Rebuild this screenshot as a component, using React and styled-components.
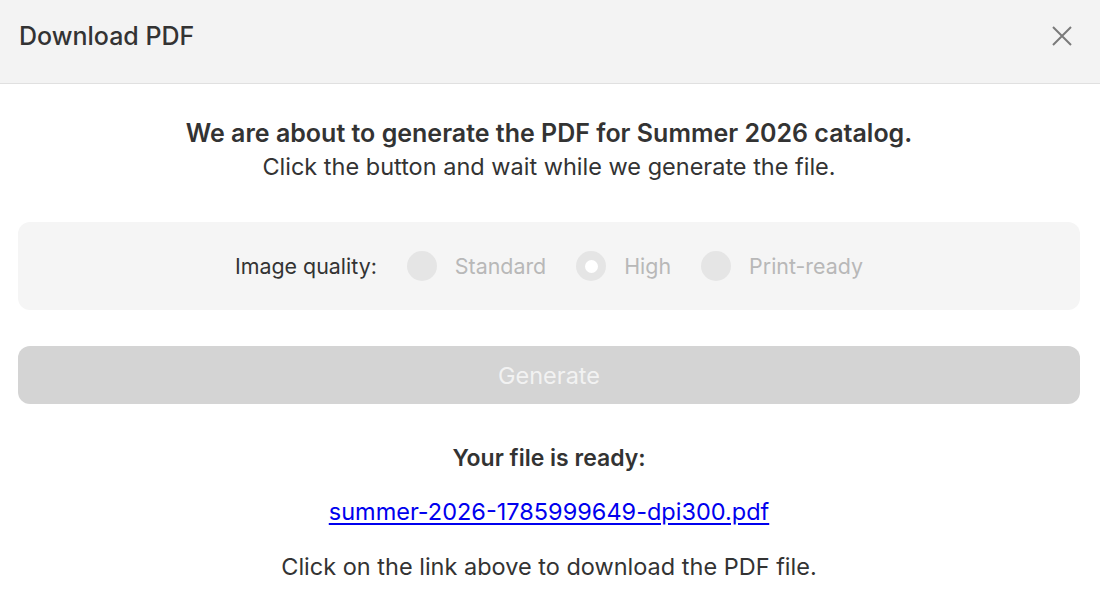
import React, { useState } from 'react';
import styled, { createGlobalStyle } from 'styled-components';

const GlobalStyle = createGlobalStyle`
  body {
    margin: 0;
    background: #fff;
    font-family: Inter, "Noto Sans", sans-serif;
    color: #333;
  }
`;

const Dialog = styled.div`
  width: 1100px;
  height: 600px;
  background: #fff;
  overflow: hidden;
`;

const Header = styled.header`
  height: 84px;
  background: #f3f3f3;
  border-bottom: 1px solid #e0e0e0;
  display: flex;
  align-items: flex-start;
  justify-content: space-between;
  padding: 20px 28px 0 19px;
  box-sizing: border-box;
`;

const Title = styled.h2`
  margin: 0;
  font-size: 25px;
  line-height: 32px;
  font-weight: 500;
  color: #333;
`;

const CloseButton = styled.button`
  border: 0;
  background: none;
  padding: 0;
  margin-top: 6px;
  width: 20px;
  height: 20px;
  display: flex;
  align-items: center;
  justify-content: center;
  color: #7a7a7a;
  cursor: pointer;
`;

const Body = styled.div`
  padding: 32px 20px 0 18px;
  display: flex;
  flex-direction: column;
  align-items: stretch;
  text-align: center;
`;

const Lead = styled.p`
  margin: 0;
  font-size: 25px;
  line-height: 34px;
  font-weight: 600;
  color: #333;
`;

const Sub = styled.p`
  margin: 0;
  font-size: 23.5px;
  line-height: 34px;
  color: #333;
`;

const OptionsPanel = styled.div`
  margin-top: 38px;
  height: 88px;
  background: #f5f5f5;
  border-radius: 12px;
  display: flex;
  align-items: center;
  justify-content: center;
  gap: 30px;
  font-size: 21.4px;
`;

const GroupLabel = styled.span`
  color: #333;
`;

const Option = styled.label`
  display: flex;
  align-items: center;
  gap: 18px;
  color: #b8b8b8;
`;

const Dot = styled.span`
  width: 30px;
  height: 30px;
  border-radius: 50%;
  background: #e5e5e5;
  display: flex;
  align-items: center;
  justify-content: center;

  &::after {
    content: '';
    width: ${(p) => (p.$checked ? '13px' : '0')};
    height: ${(p) => (p.$checked ? '13px' : '0')};
    border-radius: 50%;
    background: #fff;
  }
`;

const GenerateButton = styled.button`
  margin-top: 36px;
  height: 58px;
  border: 0;
  border-radius: 12px;
  background: #d4d4d4;
  color: #f2f2f2;
  font-family: inherit;
  font-size: 23.5px;
`;

const Ready = styled.p`
  margin: 39px 0 0;
  font-size: 23px;
  line-height: 30px;
  font-weight: 600;
  color: #333;
`;

const FileLink = styled.a`
  margin-top: 24px;
  align-self: center;
  font-size: 23.5px;
  line-height: 30px;
  color: #0000ee;
  text-decoration: underline;
  text-underline-offset: 3px;
`;

const Hint = styled.p`
  margin: 25px 0 0;
  font-size: 23.5px;
  line-height: 30px;
  color: #333;
`;

const qualities = ['Standard', 'High', 'Print-ready'];

export default function App() {
  const [quality] = useState('High');

  return (
    <>
      <GlobalStyle />
      <Dialog>
        <Header>
          <Title>Download PDF</Title>
          <CloseButton aria-label="Close">
            <svg width="20" height="20" viewBox="0 0 20 20" fill="none" stroke="currentColor" strokeWidth="2">
              <path d="M1 1L19 19M19 1L1 19" />
            </svg>
          </CloseButton>
        </Header>
        <Body>
          <Lead>We are about to generate the PDF for Summer 2026 catalog.</Lead>
          <Sub>Click the button and wait while we generate the file.</Sub>
          <OptionsPanel>
            <GroupLabel>Image quality:</GroupLabel>
            {qualities.map((q) => (
              <Option key={q}>
                <Dot $checked={q === quality} />
                {q}
              </Option>
            ))}
          </OptionsPanel>
          <GenerateButton disabled>Generate</GenerateButton>
          <Ready>Your file is ready:</Ready>
          <FileLink href="#">summer-2026-1785999649-dpi300.pdf</FileLink>
          <Hint>Click on the link above to download the PDF file.</Hint>
        </Body>
      </Dialog>
    </>
  );
}
